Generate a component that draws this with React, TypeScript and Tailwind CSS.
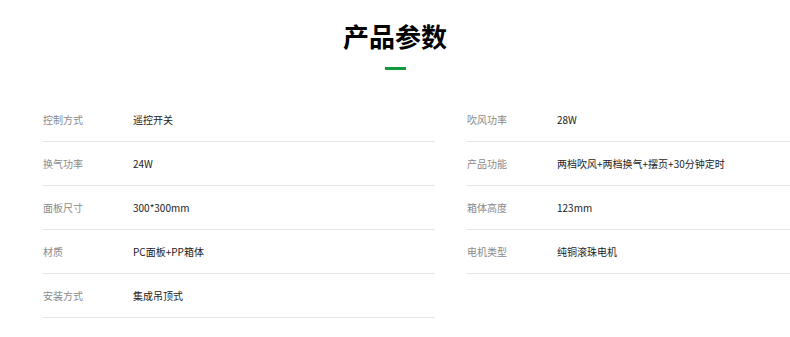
const left = [
  ["控制方式", "遥控开关"],
  ["换气功率", "24W"],
  ["面板尺寸", "300*300mm"],
  ["材质", "PC面板+PP箱体"],
  ["安装方式", "集成吊顶式"],
];

const right = [
  ["吹风功率", "28W"],
  ["产品功能", "两档吹风+两档换气+摆页+30分钟定时"],
  ["箱体高度", "123mm"],
  ["电机类型", "纯铜滚珠电机"],
];

function ParamList({ rows }: { rows: string[][] }) {
  return (
    <div className="flex flex-col">
      {rows.map(([label, value]) => (
        <div
          key={label}
          className="flex items-center h-[44px] border-b border-[#e6e6e6]"
        >
          <span className="w-[90px] shrink-0 text-[10px] text-[#8a8a8a]">
            {label}
          </span>
          <span className="text-[10px] text-[#222]">{value}</span>
        </div>
      ))}
    </div>
  );
}

export default function App() {
  return (
    <div
      className="w-[790px] h-[337px] overflow-hidden bg-white"
      style={{ fontFamily: '"Noto Sans CJK SC", "Noto Sans", sans-serif' }}
    >
      <div className="flex flex-col items-center pt-[20px]">
        <h2 className="text-[26px] leading-[32px] font-bold text-black">
          产品参数
        </h2>
        <div className="mt-[15px] w-[21px] h-[3px] bg-[#0f9a3c]" />
      </div>
      <div className="grid grid-cols-[392px_392px] gap-x-[32px] pl-[43px] mt-[28px]">
        <ParamList rows={left} />
        <ParamList rows={right} />
      </div>
    </div>
  );
}
